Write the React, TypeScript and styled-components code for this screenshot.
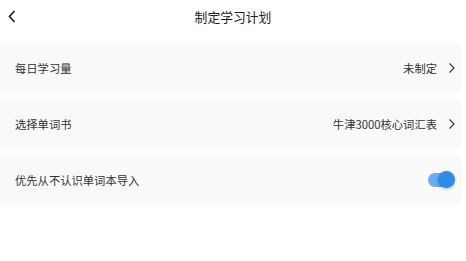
import styled, { createGlobalStyle } from "styled-components";

const GlobalStyle = createGlobalStyle`
  body {
    margin: 0;
    background: #ffffff;
    font-family: "Noto Sans CJK SC", "Noto Sans", sans-serif;
  }
`;

const Page = styled.div`
  width: 466px;
  display: flex;
  flex-direction: column;
`;

const Header = styled.div`
  height: 33px;
  position: relative;
  display: flex;
  align-items: center;
  justify-content: center;
`;

const Back = styled.button`
  position: absolute;
  left: 4px;
  top: 7px;
  border: none;
  background: none;
  padding: 0;
  width: 16px;
  height: 18px;
  display: flex;
  align-items: center;
  justify-content: center;
`;

const Title = styled.h1`
  margin: 0;
  font-size: 12.8px;
  font-weight: 400;
  color: #222;
`;

const List = styled.div`
  margin-top: 11px;
  display: flex;
  flex-direction: column;
  gap: 8px;
  padding-right: 4px;
`;

const Row = styled.div`
  height: 48px;
  background: #f9f9f9;
  border-radius: 0 6px 6px 0;
  display: flex;
  align-items: center;
  padding: 0 6px 0 15px;
`;

const Label = styled.span`
  flex: 1;
  font-size: 11.3px;
  color: #333;
`;

const Value = styled.span`
  font-size: 11.3px;
  color: #333;
  margin-right: 11px;
`;

const Toggle = styled.div<{ $on: boolean }>`
  position: relative;
  width: 24px;
  height: 14px;
  border-radius: 7px;
  margin-right: 4px;
  background: ${(p) => (p.$on ? "#6aadee" : "#ccc")};
  &::after {
    content: "";
    position: absolute;
    top: -2px;
    left: ${(p) => (p.$on ? "10px" : "-4px")};
    width: 17px;
    height: 17px;
    border-radius: 50%;
    background: #2f8ce5;
    box-shadow: 0 1px 3px rgba(0, 0, 0, 0.3);
  }
`;

const Chevron = () => (
  <svg width="8" height="12" viewBox="0 0 8 12">
    <path d="M1.5 1.5 L6 6 L1.5 10.5" fill="none" stroke="#444" strokeWidth="1.3" />
  </svg>
);

export default function App() {
  return (
    <Page>
      <GlobalStyle />
      <Header>
        <Back>
          <svg width="8" height="13" viewBox="0 0 8 13">
            <path d="M6.5 1 L1.5 6.5 L6.5 12" fill="none" stroke="#222" strokeWidth="1.7" />
          </svg>
        </Back>
        <Title>制定学习计划</Title>
      </Header>
      <List>
        <Row>
          <Label>每日学习量</Label>
          <Value>未制定</Value>
          <Chevron />
        </Row>
        <Row>
          <Label>选择单词书</Label>
          <Value>牛津3000核心词汇表</Value>
          <Chevron />
        </Row>
        <Row>
          <Label>优先从不认识单词本导入</Label>
          <Toggle $on />
        </Row>
      </List>
    </Page>
  );
}
